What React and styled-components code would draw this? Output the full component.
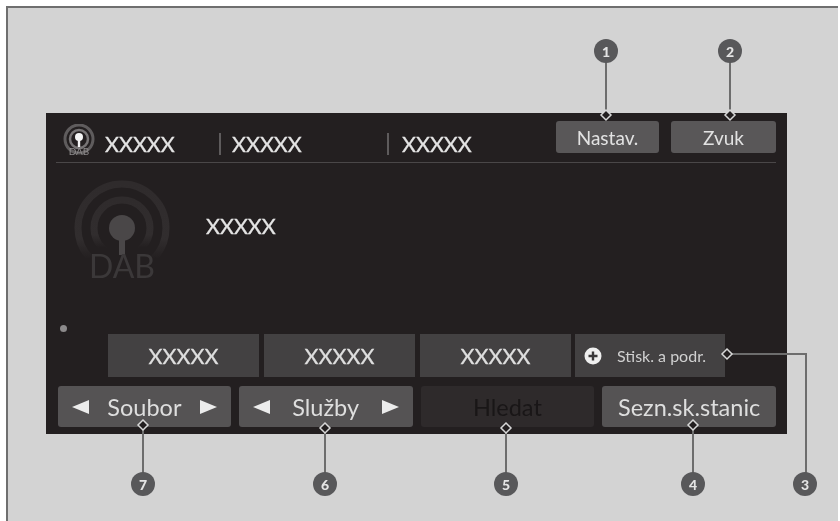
import React from "react";
import styled, { createGlobalStyle } from "styled-components";

const Global = createGlobalStyle`
  html, body { margin: 0; padding: 0; background: #fff; }
  body { width: 840px; height: 521px; overflow: hidden; font-family: Lato, "Liberation Sans", sans-serif; }
`;

const Page = styled.div`
  position: relative;
  width: 840px;
  height: 521px;
  padding: 6px 0 0 6px;
  box-sizing: border-box;
  overflow: hidden;
  filter: blur(0.55px);
`;

const Frame = styled.div`
  width: 832px;
  height: 520px;
  box-sizing: border-box;
  padding: 105px 0 0 38px;
  background: #d3d3d3;
  border-top: 2px solid #6f6f6f;
  border-left: 2px solid #6f6f6f;
`;

const Screen = styled.section`
  width: 741px;
  height: 321px;
  box-sizing: border-box;
  background: #231f20;
  display: flex;
  flex-direction: column;
  padding: 8px 11px 7px 12px;
  color: #dcdcdc;
`;

const TopBar = styled.header`
  height: 42px;
  margin-left: -2px;
  padding-left: 6px;
  box-sizing: border-box;
  display: flex;
  align-items: flex-start;
  border-bottom: 1px solid #4a4748;
`;

const StatusGroup = styled.div`
  flex: 1;
  height: 32px;
  display: flex;
  align-items: center;
  padding-top: 13px;
  box-sizing: border-box;
`;

const StatusCell = styled.div`
  width: ${p => p.$w}px;
  display: flex;
  align-items: center;
  font-size: 21.5px;
  line-height: 24px;
  color: #e4e4e4;
  -webkit-text-stroke: 0.3px #e4e4e4;
`;

const Sep = styled.span`
  width: 2px;
  height: 22px;
  background: #5e5b5c;
  margin-right: ${p => p.$gap}px;
`;

const TopButtons = styled.div`
  display: flex;
  gap: 12px;
`;

const TopButton = styled.div`
  width: ${p => p.$w}px;
  height: 32px;
  background: #595758;
  border-radius: 3px;
  display: flex;
  align-items: center;
  justify-content: center;
  font-size: 19px;
  color: #e2e2e2;
`;

const Body = styled.div`
  flex: 1;
  display: flex;
  align-items: flex-start;
  padding: 15px 0 0 15px;
`;

const StationName = styled.div`
  margin: 36px 0 0 33px;
  font-size: 21.5px;
  line-height: 24px;
  color: #e4e4e4;
  -webkit-text-stroke: 0.3px #e4e4e4;
`;

const PageDot = styled.span`
  position: absolute;
  left: 60px;
  top: 325px;
  width: 7px;
  height: 7px;
  border-radius: 50%;
  background: #8c8a8b;
`;

const PresetRow = styled.div`
  display: flex;
  gap: 5px;
  margin-left: 50px;
  height: 43px;
`;

const Preset = styled.div`
  width: 151px;
  background: #434142;
  display: flex;
  align-items: center;
  justify-content: center;
  font-size: 21.5px;
  color: #dedede;
  -webkit-text-stroke: 0.3px #dedede;
`;

const HoldPreset = styled.div`
  width: 150px;
  margin-left: -1px;
  padding-left: 9px;
  box-sizing: border-box;
  background: #434142;
  display: flex;
  align-items: center;
`;

const HoldHint = styled.span`
  font-size: 16px;
  margin-left: 15px;
  white-space: nowrap;
  color: #d0d0d0;
`;

const ActionRow = styled.div`
  display: flex;
  gap: 8px;
  margin-top: 9px;
  height: 41px;
`;

const Action = styled.div`
  width: ${p => p.$w}px;
  border-radius: 3px;
  background: ${p => (p.$off ? "#2e2a2b" : "#555354")};
  color: ${p => (p.$off ? "#191617" : "#dedede")};
  display: flex;
  align-items: center;
  justify-content: ${p => (p.$arrows ? "space-between" : "center")};
  padding: 0 ${p => (p.$arrows ? "14px" : "0")};
  box-sizing: border-box;
  font-size: 23.5px;
`;

const Callout = styled.span`
  position: absolute;
  left: ${p => p.$x - 12}px;
  top: ${p => p.$y - 12}px;
  width: 24px;
  height: 24px;
  border-radius: 50%;
  background: #58585a;
  color: #e4e4e4;
  font-size: 14px;
  font-weight: 900;
  display: flex;
  align-items: center;
  justify-content: center;
`;

const Leaders = styled.svg`
  position: absolute;
  left: 0;
  top: 0;
`;

const DabSmall = () => (
  <svg width="34" height="36" viewBox="0 0 34 36" style={{ marginRight: 9, marginTop: -3 }}>
    <circle cx="17" cy="15" r="14" fill="none" stroke="#5f5c5d" strokeWidth="3" />
    <circle cx="17" cy="15" r="9" fill="none" stroke="#777475" strokeWidth="2.5" />
    <circle cx="17" cy="13" r="4" fill="#f4f4f4" />
    <rect x="15.8" y="15" width="2.4" height="8" fill="#f4f4f4" />
    <text x="17" y="31" textAnchor="middle" fontSize="10" fontFamily="Lato, sans-serif" fill="#8e8b8c">DAB</text>
  </svg>
);

const DabLarge = () => (
  <svg width="100" height="108" viewBox="0 0 100 108">
    <defs>
      <linearGradient id="ringFade" x1="0" y1="0" x2="0" y2="1">
        <stop offset="0" stopColor="#2f2b2c" />
        <stop offset="0.62" stopColor="#312d2e" />
        <stop offset="0.85" stopColor="#231f20" />
      </linearGradient>
    </defs>
    <circle cx="49" cy="50" r="44" fill="none" stroke="url(#ringFade)" strokeWidth="7" />
    <circle cx="49" cy="50" r="28" fill="none" stroke="url(#ringFade)" strokeWidth="7" />
    <circle cx="49" cy="50" r="13" fill="#4a4748" />
    <rect x="46" y="58" width="6" height="19" fill="#4a4748" />
    <text x="49" y="100" textAnchor="middle" fontSize="32" fontFamily="Lato, sans-serif" fill="#3b3839">DAB</text>
  </svg>
);

const PlusIcon = () => (
  <svg width="18" height="18" viewBox="0 0 18 18">
    <circle cx="9" cy="9" r="8.5" fill="#efefef" />
    <path d="M9 4.5v9M4.5 9h9" stroke="#3a3839" strokeWidth="2.4" />
  </svg>
);

const Arrow = ({ right }) => (
  <svg width="17" height="14" viewBox="0 0 17 14">
    <path d={right ? "M0 0L17 7L0 14Z" : "M17 0L0 7L17 14Z"} fill="#ececec" />
  </svg>
);

const Diamond = ({ x, y }) => (
  <path d={`M${x} ${y - 5}L${x + 5} ${y}L${x} ${y + 5}L${x - 5} ${y}Z`} fill="#231f20" stroke="#d8d8d8" strokeWidth="1.5" />
);

const lines = [
  "M606 62V110",
  "M730 62V110",
  "M732 354H806V474",
  "M693 430V474",
  "M506 433V474",
  "M325 433V474",
  "M143 430V474",
];
const diamonds = [[606, 115], [730, 115], [727, 354], [693, 425], [506, 428], [325, 428], [143, 425]];
const badges = [[606, 51, 1], [730, 51, 2], [805, 484, 3], [693, 484, 4], [506, 484, 5], [325, 484, 6], [143, 484, 7]];

export default function App() {
  return (
    <>
      <Global />
      <Page>
        <Frame>
          <Screen>
            <TopBar>
              <StatusGroup>
                <DabSmall />
                <StatusCell $w={114}>XXXXX</StatusCell>
                <StatusCell $w={168}><Sep $gap={11} />XXXXX</StatusCell>
                <StatusCell $w={120}><Sep $gap={13} />XXXXX</StatusCell>
              </StatusGroup>
              <TopButtons>
                <TopButton $w={103}>Nastav.</TopButton>
                <TopButton $w={105}>Zvuk</TopButton>
              </TopButtons>
            </TopBar>
            <Body>
              <DabLarge />
              <StationName>XXXXX</StationName>
            </Body>
            <PresetRow>
              <Preset>XXXXX</Preset>
              <Preset>XXXXX</Preset>
              <Preset>XXXXX</Preset>
              <HoldPreset><PlusIcon /><HoldHint>Stisk. a podr.</HoldHint></HoldPreset>
            </PresetRow>
            <ActionRow>
              <Action $w={173} $arrows><Arrow />Soubor<Arrow right /></Action>
              <Action $w={174} $arrows><Arrow />Služby<Arrow right /></Action>
              <Action $w={174} $off>Hledat</Action>
              <Action $w={174}>Sezn.sk.stanic</Action>
            </ActionRow>
          </Screen>
        </Frame>
        <PageDot />
        <Leaders width="840" height="521" viewBox="0 0 840 521">
          {lines.map(d => <path key={d} d={d} fill="none" stroke="#6d6d6d" strokeWidth="2" />)}
          {diamonds.map(([x, y]) => <Diamond key={x} x={x} y={y} />)}
        </Leaders>
        {badges.map(([x, y, n]) => <Callout key={n} $x={x} $y={y}>{n}</Callout>)}
      </Page>
    </>
  );
}
